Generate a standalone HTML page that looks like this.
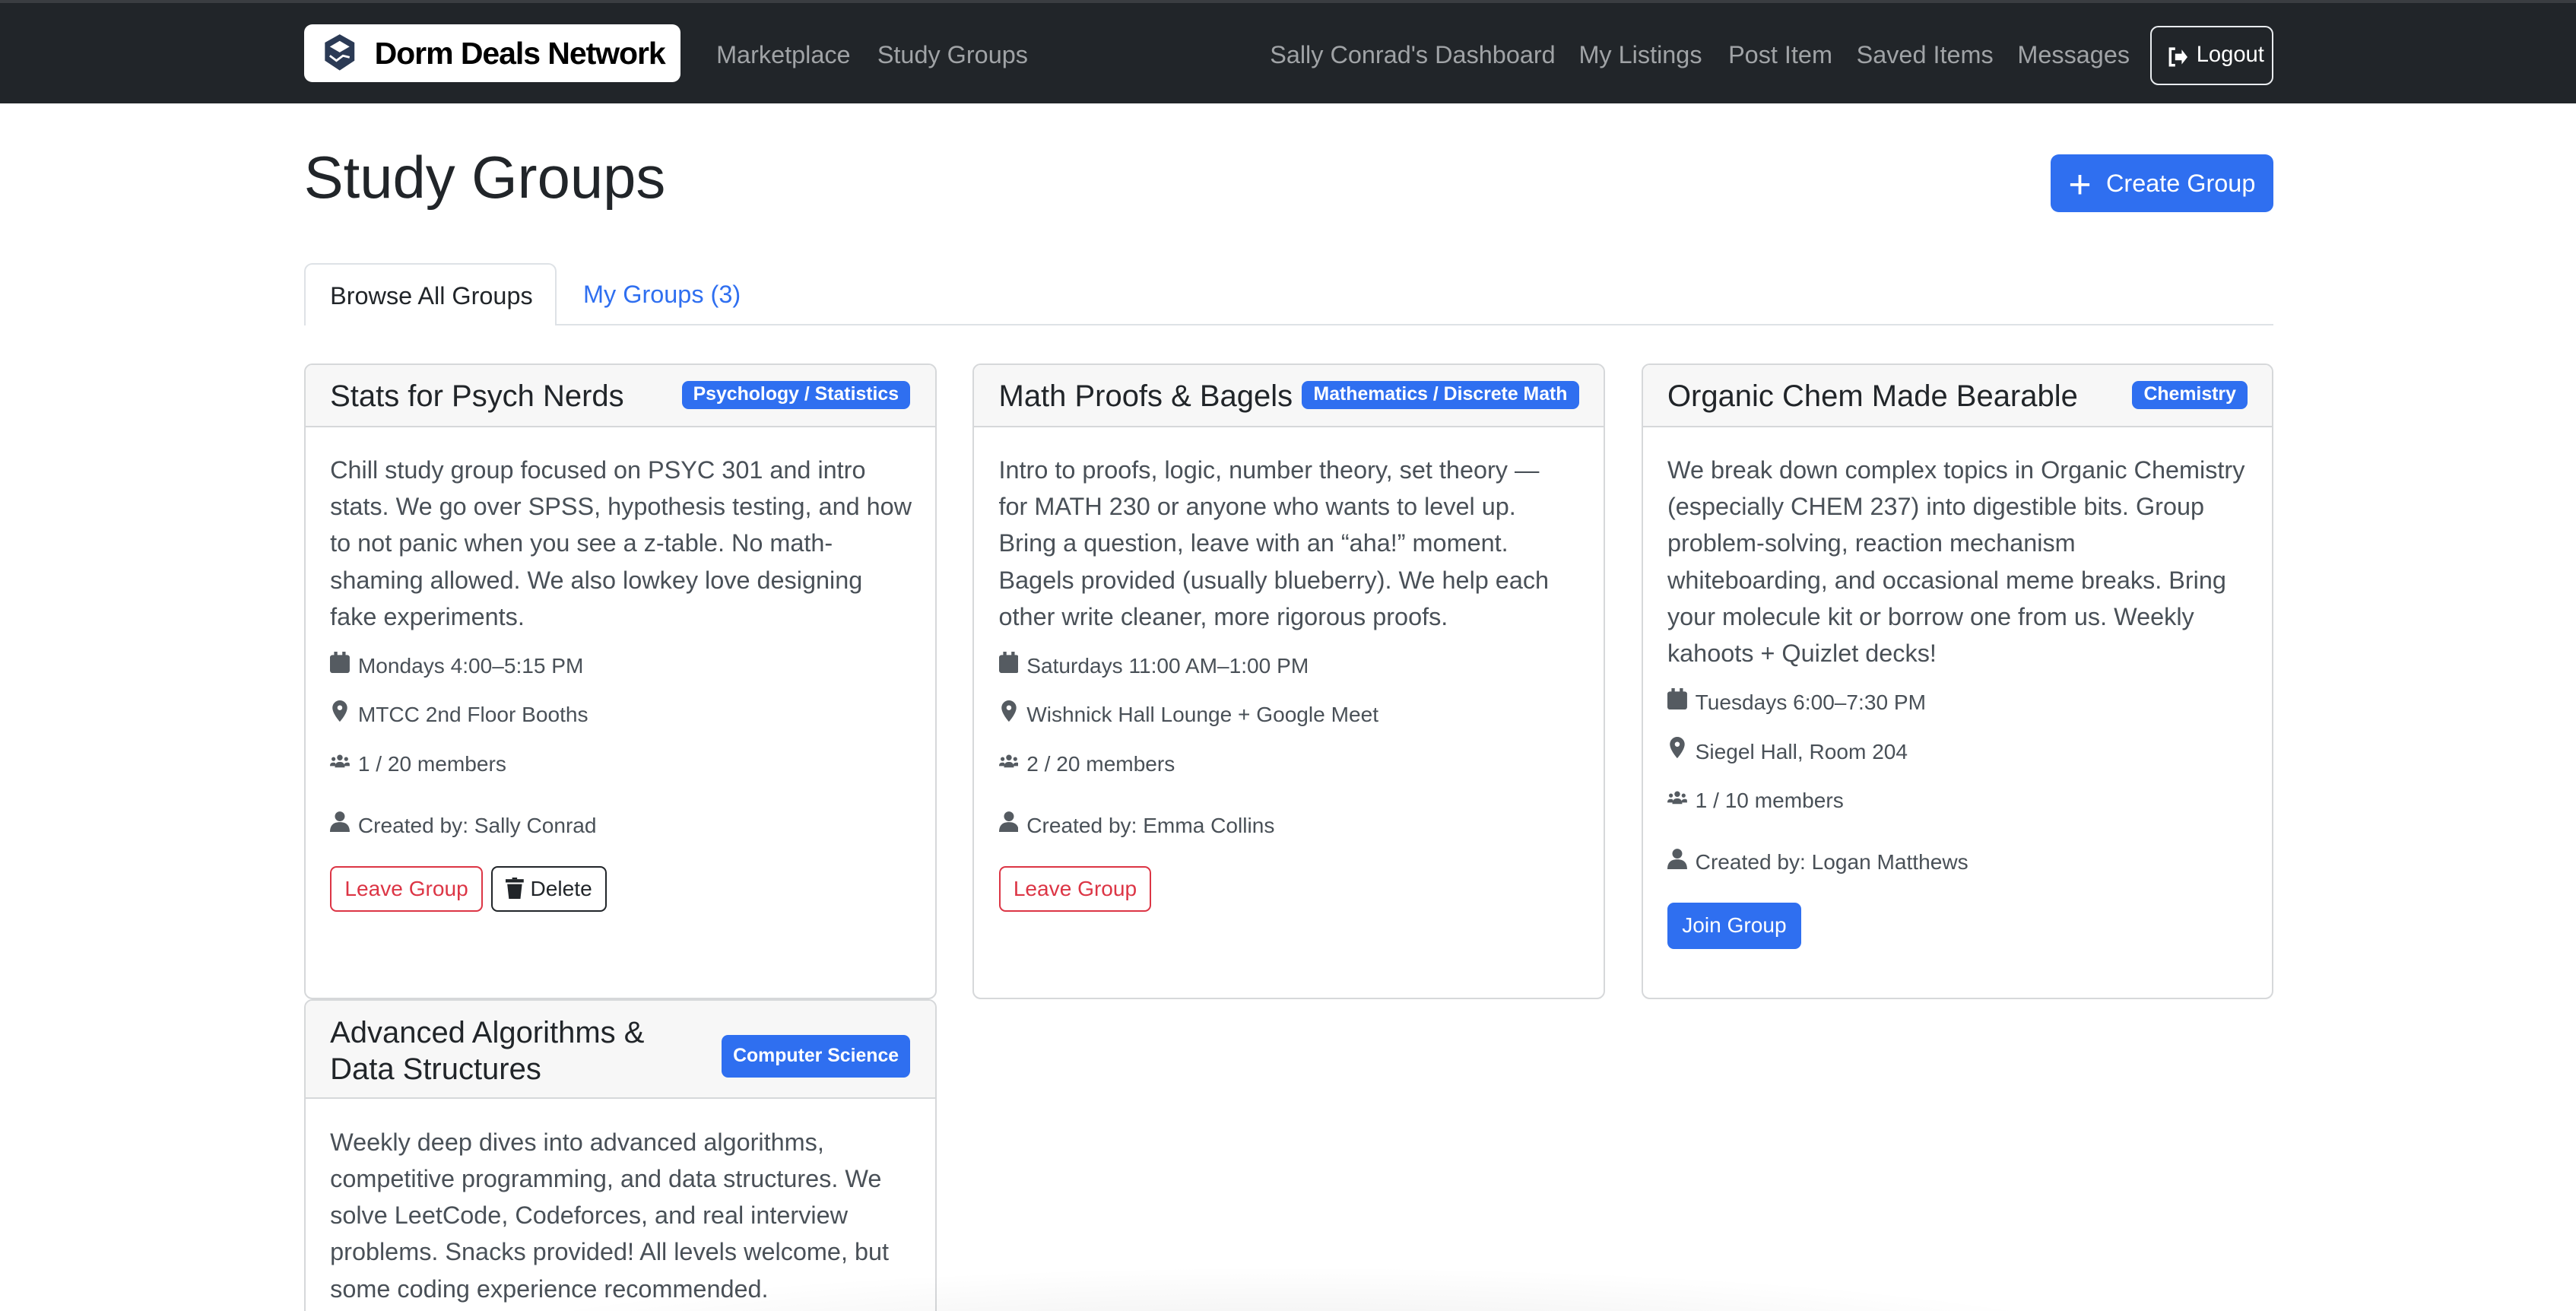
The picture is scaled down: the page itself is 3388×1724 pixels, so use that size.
<!DOCTYPE html>
<html><head><meta charset="utf-8">
<style>
html{zoom:2.16071;overflow:hidden;height:798px}
*{box-sizing:border-box}
body{margin:0;width:1568px;height:798px;overflow:hidden;background:#fff;font-family:"Liberation Sans",Arial,sans-serif;color:#212529;position:relative}
.nav{position:absolute;left:0;top:0;width:1568px;height:63px;background:#212529;border-top:2px solid #3a3d41}
.logo{position:absolute;left:185px;top:13px;width:229px;height:35px;background:#fff;border-radius:5px}
.logo span{position:absolute;left:43px;top:7px;font-size:19px;font-weight:bold;color:#000;letter-spacing:-0.5px}
.nl{position:absolute;top:23px;font-size:15px;color:#a0a3a6}
.logout{position:absolute;left:1309px;top:14px;width:75px;height:36px;border:1px solid #e9ecef;border-radius:5px;color:#fff;font-size:13.5px;padding:9px 0 0 27px}
h1{position:absolute;left:185px;top:88px;margin:0;font-size:36px;font-weight:500}
.cg{position:absolute;left:1248px;top:94px;width:136px;height:35px;background:#2f6ff0;border-radius:5px;color:#fff;font-size:15px;padding:9px 0 0 34px}
.tabline{position:absolute;left:185px;top:197px;width:1199px;border-top:1px solid #dee2e6}
.tab1{position:absolute;left:185px;top:160px;width:154px;height:38px;border:1px solid #dee2e6;border-bottom:none;border-radius:5px 5px 0 0;background:#fff;font-size:15px;padding:11px 0 0 15px}
.tab2{position:absolute;left:355px;top:171px;font-size:15px;color:#2f6ff0}
.card{position:absolute;width:385px;border:1px solid #d6d8da;border-radius:5px;background:#fff;overflow:hidden}
.hd{background:#f7f7f7;border-bottom:1px solid #d6d8da;height:38px;position:relative;padding:9px 15px;font-size:18.5px;font-weight:500;white-space:nowrap}
.badge{position:absolute;top:10px;right:15px;background:#2f6ff0;color:#fff;font-size:11.5px;font-weight:bold;padding:2px 7px;border-radius:4px}
.bd{padding:15px 15px;font-size:15px;line-height:22.3px;color:#495057;white-space:nowrap}
.m{font-size:13px;color:#495057;height:29.7px;display:flex;align-items:flex-start}
.m svg{width:12px;height:13px;margin-right:5px;margin-top:2px;fill:#555b61}
.btn{display:inline-block;font-size:13px;padding:4px 8px;line-height:18px;border-radius:4px;margin-top:6px;margin-right:5px}
.shade{position:absolute;left:240px;top:770px;width:1090px;height:60px;background:radial-gradient(ellipse at center bottom,rgba(0,0,0,.08),rgba(0,0,0,0) 70%)}
</style></head><body>
<div class="nav">
<div class="logo"><svg width="22" height="24" viewBox="0 0 22 24" style="position:absolute;left:11px;top:5px"><path d="M11 1 L20 6 V17 L11 23 L2 17 V6Z" fill="#2b3a55"/><path d="M11 5 L17 8.5 L11 12 L5 8.5Z" fill="#fff"/><path d="M5 14 L9 17 L13 14 L17 15" stroke="#fff" stroke-width="1.3" fill="none"/></svg><span>Dorm Deals Network</span></div>
<div class="nl" style="left:436px">Marketplace</div>
<div class="nl" style="left:534px">Study Groups</div>
<div class="nl" style="left:773px">Sally Conrad's Dashboard</div>
<div class="nl" style="left:961px">My Listings</div>
<div class="nl" style="left:1052px">Post Item</div>
<div class="nl" style="left:1130px">Saved Items</div>
<div class="nl" style="left:1228px">Messages</div>
<div class="logout"><svg width="13" height="12" viewBox="0 0 13 12" style="position:absolute;left:9px;top:12px"><path d="M5 1H2v10h3" stroke="#fff" stroke-width="1.6" fill="none"/><path d="M5 4h4V1.5L12.5 6 9 10.5V8H5z" fill="#fff"/></svg>Logout</div>
</div>
<h1>Study Groups</h1>
<div class="cg"><span style="position:absolute;left:11px;top:4px;font-size:24px;font-weight:300">+</span>Create Group</div>
<div class="tabline"></div>
<div class="tab1">Browse All Groups</div>
<div class="tab2">My Groups (3)</div>

<div class="card" style="left:185px;top:221px;height:387px">
<div class="hd">Stats for Psych Nerds<span class="badge">Psychology / Statistics</span></div>
<div class="bd">Chill study group focused on PSYC 301 and intro<br>stats. We go over SPSS, hypothesis testing, and how<br>to not panic when you see a z-table. No math-<br>shaming allowed. We also lowkey love designing<br>fake experiments.
<div style="height:8px"></div>
<div class="m"><svg viewBox="0 0 12 13"><rect x="0" y="2" width="12" height="11" rx="1.5"/><rect x="2.5" y="0" width="2" height="3"/><rect x="7.5" y="0" width="2" height="3"/></svg>Mondays 4:00–5:15 PM</div>
<div class="m"><svg viewBox="0 0 12 13"><path d="M6 0a4.5 4.5 0 0 1 4.5 4.5C10.5 8 6 13 6 13S1.5 8 1.5 4.5A4.5 4.5 0 0 1 6 0zm0 3a1.5 1.5 0 1 0 0 3 1.5 1.5 0 0 0 0-3z"/></svg>MTCC 2nd Floor Booths</div>
<div class="m"><svg viewBox="0 0 14 13"><circle cx="7" cy="5" r="2"/><circle cx="2.5" cy="6" r="1.4"/><circle cx="11.5" cy="6" r="1.4"/><path d="M3.5 12c0-3 1.5-4 3.5-4s3.5 1 3.5 4z"/><path d="M0 11c0-2 1-2.5 2.5-2.5S4 9 4 11zM10 11c0-2 1-2.5 2.5-2.5S14 9 14 11z"/></svg>1 / 20 members</div>
<div style="height:8px"></div>
<div class="m"><svg viewBox="0 0 12 13"><circle cx="6" cy="3.5" r="3"/><path d="M0 13c0-4 2-6 6-6s6 2 6 6z"/></svg>Created by: Sally Conrad</div>
<span class="btn" style="border:1px solid #dc3545;color:#dc3545">Leave Group</span><span class="btn" style="border:1px solid #212529;color:#212529"><svg width="11" height="13" viewBox="0 0 11 13" style="vertical-align:-2px;margin-right:4px"><rect x="0" y="1" width="11" height="2" fill="#212529"/><rect x="4" y="0" width="3" height="1" fill="#212529"/><path d="M1 4h9l-1 9H2z" fill="#212529"/></svg>Delete</span>
</div></div>

<div class="card" style="left:592px;top:221px;height:387px">
<div class="hd">Math Proofs &amp; Bagels<span class="badge">Mathematics / Discrete Math</span></div>
<div class="bd">Intro to proofs, logic, number theory, set theory —<br>for MATH 230 or anyone who wants to level up.<br>Bring a question, leave with an “aha!” moment.<br>Bagels provided (usually blueberry). We help each<br>other write cleaner, more rigorous proofs.
<div style="height:8px"></div>
<div class="m"><svg viewBox="0 0 12 13"><rect x="0" y="2" width="12" height="11" rx="1.5"/><rect x="2.5" y="0" width="2" height="3"/><rect x="7.5" y="0" width="2" height="3"/></svg>Saturdays 11:00 AM–1:00 PM</div>
<div class="m"><svg viewBox="0 0 12 13"><path d="M6 0a4.5 4.5 0 0 1 4.5 4.5C10.5 8 6 13 6 13S1.5 8 1.5 4.5A4.5 4.5 0 0 1 6 0zm0 3a1.5 1.5 0 1 0 0 3 1.5 1.5 0 0 0 0-3z"/></svg>Wishnick Hall Lounge + Google Meet</div>
<div class="m"><svg viewBox="0 0 14 13"><circle cx="7" cy="5" r="2"/><circle cx="2.5" cy="6" r="1.4"/><circle cx="11.5" cy="6" r="1.4"/><path d="M3.5 12c0-3 1.5-4 3.5-4s3.5 1 3.5 4z"/><path d="M0 11c0-2 1-2.5 2.5-2.5S4 9 4 11zM10 11c0-2 1-2.5 2.5-2.5S14 9 14 11z"/></svg>2 / 20 members</div>
<div style="height:8px"></div>
<div class="m"><svg viewBox="0 0 12 13"><circle cx="6" cy="3.5" r="3"/><path d="M0 13c0-4 2-6 6-6s6 2 6 6z"/></svg>Created by: Emma Collins</div>
<span class="btn" style="border:1px solid #dc3545;color:#dc3545">Leave Group</span>
</div></div>

<div class="card" style="left:999px;top:221px;height:387px">
<div class="hd">Organic Chem Made Bearable<span class="badge">Chemistry</span></div>
<div class="bd">We break down complex topics in Organic Chemistry<br>(especially CHEM 237) into digestible bits. Group<br>problem-solving, reaction mechanism<br>whiteboarding, and occasional meme breaks. Bring<br>your molecule kit or borrow one from us. Weekly<br>kahoots + Quizlet decks!
<div style="height:8px"></div>
<div class="m"><svg viewBox="0 0 12 13"><rect x="0" y="2" width="12" height="11" rx="1.5"/><rect x="2.5" y="0" width="2" height="3"/><rect x="7.5" y="0" width="2" height="3"/></svg>Tuesdays 6:00–7:30 PM</div>
<div class="m"><svg viewBox="0 0 12 13"><path d="M6 0a4.5 4.5 0 0 1 4.5 4.5C10.5 8 6 13 6 13S1.5 8 1.5 4.5A4.5 4.5 0 0 1 6 0zm0 3a1.5 1.5 0 1 0 0 3 1.5 1.5 0 0 0 0-3z"/></svg>Siegel Hall, Room 204</div>
<div class="m"><svg viewBox="0 0 14 13"><circle cx="7" cy="5" r="2"/><circle cx="2.5" cy="6" r="1.4"/><circle cx="11.5" cy="6" r="1.4"/><path d="M3.5 12c0-3 1.5-4 3.5-4s3.5 1 3.5 4z"/><path d="M0 11c0-2 1-2.5 2.5-2.5S4 9 4 11zM10 11c0-2 1-2.5 2.5-2.5S14 9 14 11z"/></svg>1 / 10 members</div>
<div style="height:8px"></div>
<div class="m"><svg viewBox="0 0 12 13"><circle cx="6" cy="3.5" r="3"/><path d="M0 13c0-4 2-6 6-6s6 2 6 6z"/></svg>Created by: Logan Matthews</div>
<span class="btn" style="background:#2f6ff0;border:1px solid #2f6ff0;color:#fff">Join Group</span>
</div></div>

<div class="card" style="left:185px;top:608px;height:200px">
<div class="hd" style="height:60px;line-height:22px;padding-top:9px">Advanced Algorithms &amp;<br>Data Structures<span class="badge" style="top:21px">Computer Science</span></div>
<div class="bd">Weekly deep dives into advanced algorithms,<br>competitive programming, and data structures. We<br>solve LeetCode, Codeforces, and real interview<br>problems. Snacks provided! All levels welcome, but<br>some coding experience recommended.</div>
</div>
<div class="shade"></div>
</body></html>
